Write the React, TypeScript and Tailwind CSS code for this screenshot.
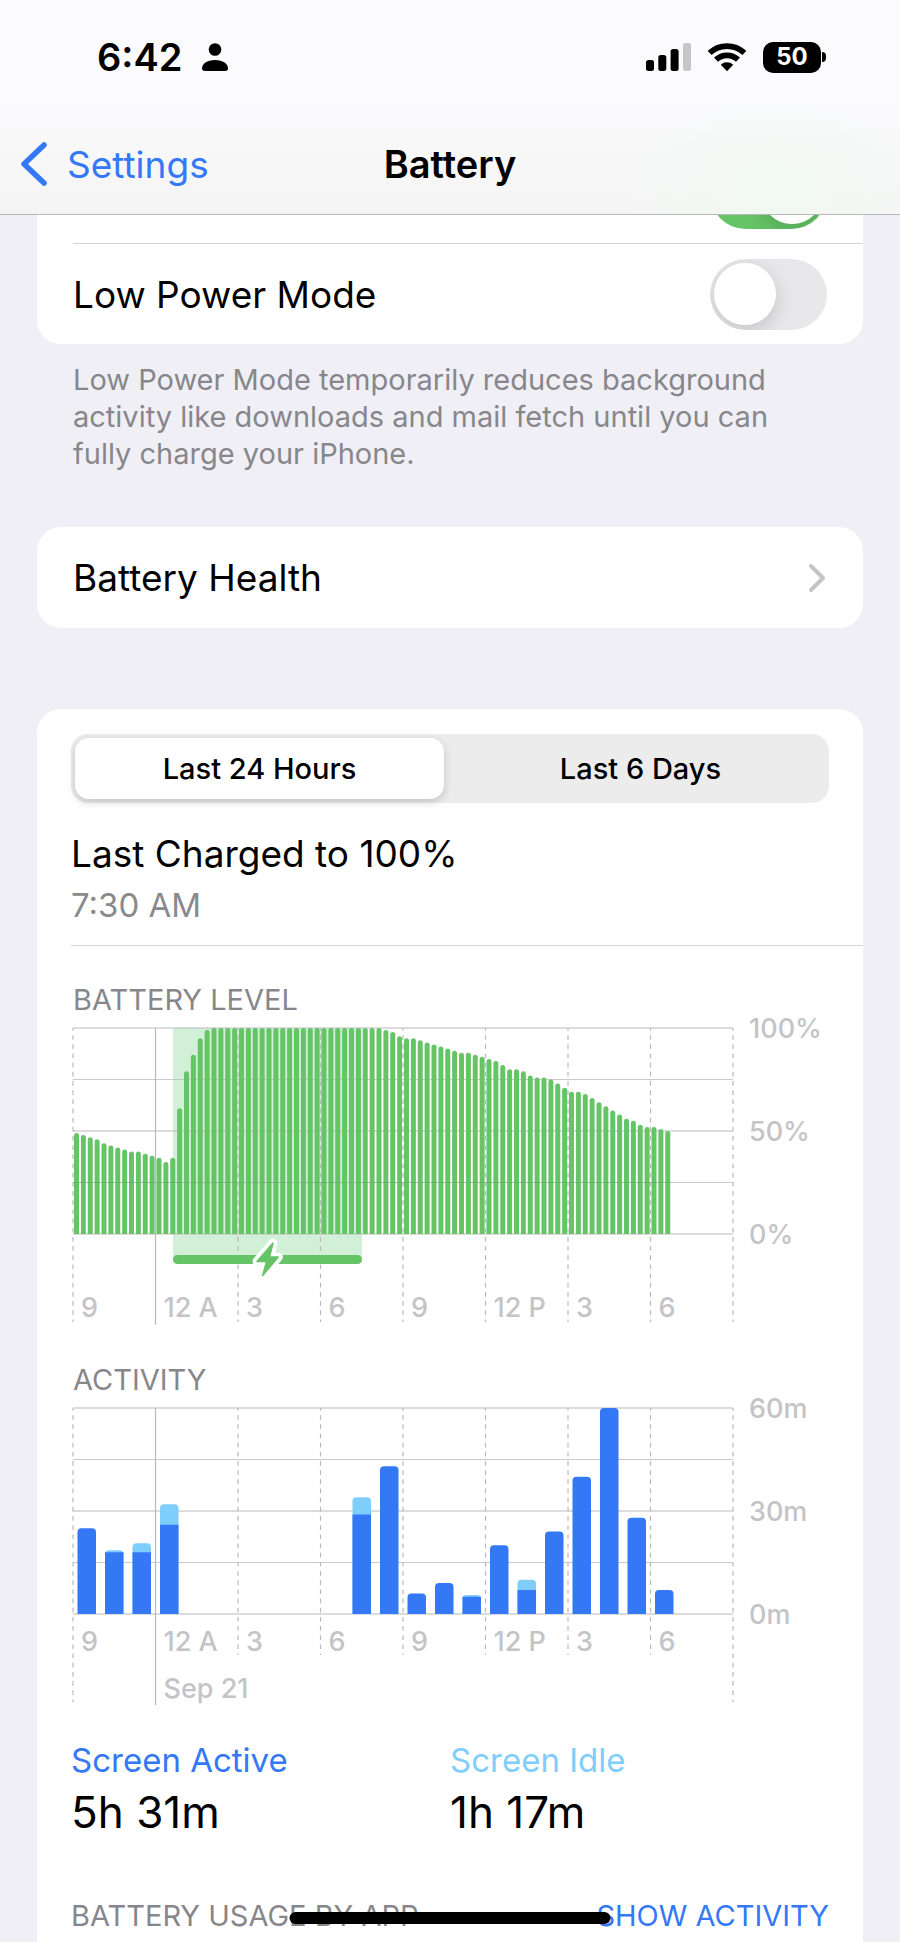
import { useState } from 'react'

const PLOT_X = 2
const PLOT_Y = 10
const PLOT_W = 660
const PLOT_H = 206
const SLOT_W = PLOT_W / 8

const HOURS = ['9', '12 A', '3', '6', '9', '12 P', '3', '6']

// one entry per 15 minutes, in percent
const levels = [
  49, 48, 47, 46, 44, 43, 42, 41, 40, 40, 39, 38, 37, 35, 37, 61, 79, 87, 95, 99,
  ...Array(25).fill(100),
  99, 98, 96, 95, 95, 94, 93, 92, 91, 90, 89, 88, 88, 87, 86, 85, 84, 82, 80, 80,
  79, 77, 76, 76, 75, 73, 71, 69, 69, 68, 66, 64, 62, 60, 58, 56, 55, 53, 52, 52,
  51, 50,
] as number[]

// minutes of screen use per hour
const activity = [
  { hour: 0, active: 25, idle: 0 },
  { hour: 1, active: 18, idle: 0.6 },
  { hour: 2, active: 18, idle: 2.6 },
  { hour: 3, active: 26, idle: 6 },
  { hour: 10, active: 29, idle: 5 },
  { hour: 11, active: 43, idle: 0 },
  { hour: 12, active: 6, idle: 0 },
  { hour: 13, active: 9, idle: 0 },
  { hour: 14, active: 5, idle: 0.5 },
  { hour: 15, active: 20, idle: 0 },
  { hour: 16, active: 7, idle: 3 },
  { hour: 17, active: 24, idle: 0 },
  { hour: 18, active: 40, idle: 0 },
  { hour: 19, active: 60, idle: 0 },
  { hour: 20, active: 28, idle: 0 },
  { hour: 21, active: 7, idle: 0 },
]

function barPath(x: number, width: number, height: number, radius: number) {
  const bottom = PLOT_Y + PLOT_H
  const top = bottom - height
  const r = Math.min(radius, height, width / 2)
  return `M${x} ${bottom}V${top + r}q0 ${-r} ${r} ${-r}h${width - 2 * r}q${r} 0 ${r} ${r}V${bottom}Z`
}

interface GridProps {
  lineEnd: number
  edgeEnd: number
  midnightEnd: number
}

function Grid({ lineEnd, edgeEnd, midnightEnd }: GridProps) {
  return (
    <g stroke="#b9b9bb" strokeWidth="1.2">
      {[0, 1, 2, 3, 4].map(i => (
        <line
          key={i}
          x1={PLOT_X}
          x2={PLOT_X + PLOT_W}
          y1={PLOT_Y + (PLOT_H / 4) * i}
          y2={PLOT_Y + (PLOT_H / 4) * i}
          opacity={i % 2 ? 0.75 : 1}
        />
      ))}
      {Array.from({ length: 9 }, (_, i) => {
        const x = PLOT_X + SLOT_W * i
        const midnight = i === 1
        const edge = i === 0 || i === 8
        return (
          <line
            key={i}
            x1={x}
            x2={x}
            y1={PLOT_Y}
            y2={midnight ? midnightEnd : edge ? edgeEnd : lineEnd}
            strokeDasharray={midnight ? undefined : '4.7 4.47'}
            strokeDashoffset="2"
          />
        )
      })}
    </g>
  )
}

function AxisLabels({ marks, hourY }: { marks: string[]; hourY: number }) {
  return (
    <g fill="#c4c4c6" fontSize="27" fontWeight="500">
      {marks.map((mark, i) => (
        <text key={mark} x={PLOT_X + PLOT_W + 16} y={PLOT_Y + (PLOT_H / 2) * i + 10}>
          {mark}
        </text>
      ))}
      {HOURS.map((hour, i) => (
        <text key={i} x={PLOT_X + SLOT_W * i + 8} y={hourY}>
          {hour}
        </text>
      ))}
    </g>
  )
}

function BatteryLevelChart() {
  const pitch = PLOT_W / 96
  return (
    <svg viewBox="0 0 792 310" className="block h-auto w-full overflow-visible" role="img" aria-label="Battery level">
      <rect x="102" y={PLOT_Y} width="189" height="234" fill="#d2efd7" />
      <Grid lineEnd={304} edgeEnd={304} midnightEnd={307} />
      {levels.map((level, i) => (
        <path
          key={i}
          d={barPath(PLOT_X + pitch * i + 1, 5, (level / 100) * PLOT_H, 2.5)}
          fill="#65c466"
        />
      ))}
      <line x1={PLOT_X} x2="600" y1="164.5" y2="164.5" stroke="#4b5563" strokeWidth="1" opacity="0.15" />
      <rect x="102" y="237" width="189" height="9" rx="4.5" fill="#65c466" />
      <g strokeLinejoin="round">
        <path d="M202 225L186 243.5H195.500L191.700 257.500L207.300 239H198.500Z" fill="#fff" stroke="#fff" strokeWidth="9" />
        <path d="M202 225L186 243.5H195.500L191.700 257.500L207.300 239H198.500Z" fill="#65c466" stroke="#65c466" strokeWidth="1.5" />
      </g>
      <AxisLabels marks={['100%', '50%', '0%']} hourY={299} />
    </svg>
  )
}

function ActivityChart() {
  const perMinute = PLOT_H / 60
  const pitch = PLOT_W / 24
  return (
    <svg viewBox="0 0 792 310" className="block h-auto w-full overflow-visible" role="img" aria-label="Activity">
      <Grid lineEnd={257} edgeEnd={304} midnightEnd={307} />
      {activity.map(({ hour, active, idle }) => {
        const x = PLOT_X + pitch * hour + 4.5
        const activeHeight = active * perMinute
        return (
          <g key={hour}>
            {idle > 0 && <path d={barPath(x, 18.5, (active + idle) * perMinute, 4)} fill="#7fcdfb" />}
            <path d={barPath(x, 18.5, activeHeight, idle > 0 ? 0 : 4)} fill="#3478f6" />
          </g>
        )
      })}
      <AxisLabels marks={['60m', '30m', '0m']} hourY={253} />
      <text x={PLOT_X + SLOT_W + 8} y="300" fill="#c4c4c6" fontSize="27" fontWeight="500">
        Sep 21
      </text>
    </svg>
  )
}

function StatusBar() {
  return (
    <div className="flex h-[114px] items-center justify-between pr-[74px] pl-[97px]">
      <div className="flex items-center gap-5">
        <span className="text-[38px] leading-none font-semibold">6:42</span>
        <svg width="26" height="28" viewBox="0 0 26 28" aria-hidden="true">
          <circle cx="13" cy="6.500" r="6.300" />
          <path d="M3 28C1 28 0 27 0 25.500C0 21 5 17 13 17S26 21 26 25.500C26 27 25 28 23 28Z" />
        </svg>
      </div>
      <div className="flex items-center gap-[17px]">
        <svg width="45" height="28" viewBox="0 0 45 28" aria-hidden="true">
          <rect x="0" y="17" width="8" height="11" rx="2.500" />
          <rect x="12.300" y="12" width="8" height="16" rx="2.500" />
          <rect x="24.600" y="6" width="8" height="22" rx="2.500" />
          <rect x="37" y="0" width="8" height="28" rx="2.500" fill="#c6c6c7" />
        </svg>
        <svg width="38" height="29" viewBox="0 0 38 29" aria-hidden="true">
          <g fill="none" stroke="#000" strokeWidth="5.800">
            <path d="M1.600 10A25.300 25.300 0 0 1 36.400 10" />
            <path d="M8 16.700A16 16 0 0 1 30 16.700" />
          </g>
          <path d="M12.800 21.800A9 9 0 0 1 25.200 21.800L19 28.300Z" />
        </svg>
        <div className="flex items-center gap-px">
          <span className="flex h-[31px] w-[58px] items-center justify-center rounded-[10px] bg-black text-2xl leading-none font-bold text-white">
            50
          </span>
          <span className="h-[10px] w-1 rounded-r-full bg-black" />
        </div>
      </div>
    </div>
  )
}

function Header() {
  return (
    <header className="fixed inset-x-0 top-0 z-10 border-b border-[#b9b9bb] bg-[#f7f7f8] bg-[radial-gradient(ellipse_150px_90px_at_86%_88%,#f1f9f2,transparent),linear-gradient(#fbfbfd_45%,#f4f4f4)]">
      <StatusBar />
      <nav className="grid h-[100px] grid-cols-[1fr_auto_1fr] items-center pl-5 leading-none">
        <a href="#settings" className="flex items-center gap-5 text-[37px] text-[#3478f6]">
          <svg width="27" height="44" viewBox="0 0 27 44" fill="none" stroke="currentColor" strokeWidth="5.5" strokeLinecap="round" strokeLinejoin="round" aria-hidden="true">
            <path d="M24 3L4 22L24 41" />
          </svg>
          Settings
        </a>
        <h1 className="-ml-5 text-[38px] font-semibold">Battery</h1>
      </nav>
    </header>
  )
}

interface ToggleRowProps {
  id: string
  label: string
  checked: boolean
  onChange: (checked: boolean) => void
}

function ToggleRow({ id, label, checked, onChange }: ToggleRowProps) {
  return (
    <div className="ml-9 flex h-[101px] items-center justify-between border-t border-[#d4d4d6] pt-px pr-9 first:border-transparent">
      <label htmlFor={id} className="text-[37px] leading-none">
        {label}
      </label>
      <input
        id={id}
        type="checkbox"
        role="switch"
        checked={checked}
        onChange={e => onChange(e.target.checked)}
        className="h-[71px] w-[117px] shrink-0 appearance-none overflow-hidden rounded-full bg-[#e8e8ea] p-1 before:block before:size-[62px] before:rounded-full before:bg-white before:shadow-[0_6px_20px_rgba(0,0,0,0.16)] checked:bg-[#65c466] checked:before:ml-auto"
      />
    </div>
  )
}

const ranges = ['Last 24 Hours', 'Last 6 Days']

export default function App() {
  const [percentage, setPercentage] = useState(true)
  const [lowPower, setLowPower] = useState(false)
  const [range, setRange] = useState(ranges[0])

  return (
    <div className="flex min-h-screen flex-col bg-[#f0eff5] font-['Inter','Liberation_Sans',sans-serif] text-black">
      <Header />

      <main className="flex flex-1 flex-col px-[37px] pt-[142px]">
        <section className="rounded-3xl bg-white">
          <ToggleRow id="percentage" label="Battery Percentage" checked={percentage} onChange={setPercentage} />
          <ToggleRow id="low-power" label="Low Power Mode" checked={lowPower} onChange={setLowPower} />
        </section>
        <p className="mt-[17px] max-w-[780px] px-9 text-[29px] leading-[37px] text-[#87878b]">
          Low Power Mode temporarily reduces background activity like downloads and mail fetch until you can fully charge your iPhone.
        </p>

        <a href="#health" className="mt-[55px] flex h-[101px] items-center justify-between rounded-3xl bg-white px-9 text-[37px] leading-none">
          Battery Health
          <svg width="20" height="30" viewBox="0 0 20 30" fill="none" stroke="#c4c4c6" strokeWidth="4" strokeLinecap="round" strokeLinejoin="round" aria-hidden="true">
            <path d="M4 3L16 15L4 27" />
          </svg>
        </a>

        <section className="mt-[81px] flex-1 rounded-t-3xl bg-white pt-[25px] pb-2 pl-[34px]">
          <div className="mr-[34px] grid h-[69px] grid-cols-2 gap-3 rounded-[17px] bg-[#ececed] p-1">
            {ranges.map(name => (
              <button
                key={name}
                type="button"
                aria-pressed={range === name}
                onClick={() => setRange(name)}
                className="rounded-[14px] text-[29px] leading-none font-medium aria-pressed:bg-white aria-pressed:shadow-[0_3px_8px_rgba(0,0,0,0.18)]"
              >
                {name}
              </button>
            ))}
          </div>

          <div className="mt-7 border-b border-[#d4d4d6] pb-5">
            <h2 className="text-[37px] leading-[46px]">Last Charged to 100%</h2>
            <p className="mt-2 text-[33px] leading-10 text-[#8a8a8d]">7:30 AM</p>
          </div>

          <h3 className="mt-9 pl-0.5 text-[29px] leading-9 text-[#87878b]">BATTERY LEVEL</h3>
          <BatteryLevelChart />

          <h3 className="mt-[34px] pl-0.5 text-[29px] leading-9 text-[#87878b]">ACTIVITY</h3>
          <ActivityChart />

          <dl className="mt-8 mr-[34px] grid grid-cols-2">
            <div>
              <dt className="text-[33px] leading-10 text-[#3478f6]">Screen Active</dt>
              <dd className="mt-1 text-[44px] leading-[56px]">5h 31m</dd>
            </div>
            <div>
              <dt className="text-[33px] leading-10 text-[#7fcdfb]">Screen Idle</dt>
              <dd className="mt-1 text-[44px] leading-[56px]">1h 17m</dd>
            </div>
          </dl>

          <div className="mt-[58px] mr-[34px] flex items-center justify-between text-[29px] leading-9">
            <h3 className="text-[#87878b]">BATTERY USAGE BY APP</h3>
            <button type="button" className="text-[#3478f6]">SHOW ACTIVITY</button>
          </div>
        </section>
      </main>

      <div className="fixed bottom-[18px] left-1/2 h-3 w-[321px] -translate-x-1/2 rounded-full bg-black" />
    </div>
  )
}
